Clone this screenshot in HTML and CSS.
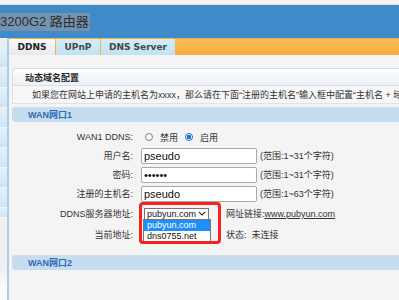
FILE: index.html
```html
<!DOCTYPE html>
<html lang="zh-CN">
<head>
<meta charset="utf-8">
<title>DDNS</title>
<link rel="stylesheet" href="styles.css">
</head>
<body>
<div class="strip"></div>
<header class="banner"><span class="title">3200G2 路由器</span></header>
<div class="main">
  <aside class="side">
    <div class="side-top"></div>
    <div class="side-item"></div><div class="side-item"></div><div class="side-item"></div>
    <div class="side-item"></div><div class="side-item"></div><div class="side-item"></div>
    <div class="side-item"></div><div class="side-item"></div><div class="side-item short"></div>
  </aside>
  <div class="content">
    <nav class="tabs">
      <span class="tab tab-ddns active">DDNS</span>
      <span class="tab tab-upnp">UPnP</span>
      <span class="tab tab-dns">DNS Server</span>
    </nav>
    <div class="page">
      <section class="panel">
        <div class="panel-head">动态域名配置</div>
        <div class="panel-desc">如果您在网站上申请的主机名为xxxx，那么请在下面“注册的主机名”输入框中配置“主机名 + 域名”</div>
      </section>
      <div class="group">WAN网口1</div>
      <form class="form">
        <div class="row row-first">
          <span class="lbl">WAN1 DDNS:</span>
          <div class="val">
            <input class="radio" type="radio" name="ddns"><span class="rtext">禁用</span>
            <input class="radio radio-2" type="radio" name="ddns" checked><span class="rtext">启用</span>
          </div>
        </div>
        <div class="row">
          <span class="lbl">用户名:</span>
          <div class="val"><input class="field" type="text" value="pseudo"><span class="hint">(范围:1~31个字符)</span></div>
        </div>
        <div class="row">
          <span class="lbl">密码:</span>
          <div class="val"><input class="field" type="password" value="pseudo"><span class="hint">(范围:1~31个字符)</span></div>
        </div>
        <div class="row">
          <span class="lbl">注册的主机名:</span>
          <div class="val"><input class="field" type="text" value="pseudo"><span class="hint">(范围:1~63个字符)</span></div>
        </div>
        <div class="row row-sel">
          <span class="lbl">DDNS服务器地址:</span>
          <div class="val">
            <div class="select">
              <span class="sel-text">pubyun.com</span>
              <svg class="chev" width="8" height="5" viewBox="0 0 8 5"><path d="M0.8 0.8 L4 4 L7.2 0.8" fill="none" stroke="#333" stroke-width="1.2"/></svg>
              <ul class="options">
                <li class="opt opt-on">pubyun.com</li>
                <li class="opt">dns0755.net</li>
              </ul>
              <div class="redbox"></div>
            </div>
            <span class="link-line">网址链接:<a class="link" href="#">www.pubyun.com</a></span>
          </div>
        </div>
        <div class="row row-last">
          <span class="lbl">当前地址:</span>
          <div class="val"><span class="status">状态:&nbsp; 未连接</span></div>
        </div>
      </form>
      <div class="group group-2">WAN网口2</div>
    </div>
  </div>
</div>
</body>
</html>
```
FILE: styles.css
```css
* { box-sizing: border-box; margin: 0; padding: 0; }
html, body { width: 399px; height: 300px; overflow: hidden; }
body {
  background: #f4f4f4;
  font-family: "Liberation Sans", "Noto Sans CJK SC", sans-serif;
  font-size: 9px;
  color: #333;
}

.strip { height: 5px; background: #f3f3f3; border-bottom: 1px solid #e0e0e0; }
.banner {
  height: 33px;
  background: #3f8ac8;
  display: flex;
  align-items: center;
}
.title {
  font-size: 13px;
  line-height: 18px;
  color: #2e2e2e;
  background: #7393b0;
  padding-right: 1px;
  white-space: nowrap;
}

.main { display: flex; height: 262px; }
.side {
  width: 9px;
  flex: none;
  border-right: 2px solid #a8cdee;
  background: linear-gradient(#f0f0f0 0, #f0f0f0 230px, #fafafa 250px);
}
.side-top { height: 10px; background: #eceff2; }
.side-item {
  height: 20px;
  background: linear-gradient(#e4f1fa, #cfe5f5);
  border-bottom: 1px solid #eef6fc;
}
.side-item.short { height: 10px; }

.content { flex: 1; min-width: 0; }
.tabs {
  height: 17px;
  display: flex;
  background: linear-gradient(#f9bd55, #f6ad39);
  border-top: 1px solid #f2b04a;
}
.tab {
  height: 16px;
  margin-right: 1px;
  display: flex;
  align-items: center;
  justify-content: center;
  font-family: "DejaVu Sans", sans-serif;
  font-weight: bold;
  font-size: 9px;
  color: #454545;
  background: linear-gradient(#d3edf8, #c0e2f3);
}
.tab.active { background: linear-gradient(#f8f9fa, #e6e9ec); color: #222; }
.tab-ddns { width: 46px; }
.tab-upnp { width: 44px; }
.tab-dns { width: 74px; }

.page { padding: 13px 0 0 3px; }
.panel-head {
  height: 18px;
  display: flex;
  align-items: center;
  padding-left: 12px;
  border: 1px solid #d5e0eb;
  border-right: none;
  border-radius: 3px 0 0 0;
  background: linear-gradient(#fdfeff, #ecf1f6);
  font-weight: bold;
  color: #2a2a2a;
}
.panel-desc {
  height: 18px;
  display: flex;
  align-items: center;
  padding-left: 19px;
  border: 1px solid #e2e2e2;
  border-top: none;
  border-right: none;
  background: #f7f7f7;
  white-space: nowrap;
  overflow: hidden;
}
.group {
  margin-top: 3px;
  height: 15px;
  display: flex;
  align-items: center;
  padding-left: 16px;
  border-radius: 3px 0 0 3px;
  background: #c6dcef;
  color: #2c6cb1;
  font-weight: bold;
}
.group-2 { margin-top: 11px; }

.form { padding-top: 6px; }
.row { height: 19px; display: flex; align-items: center; }
.row-first { height: 18px; }
.row-sel { height: 21px; }
.row-last { height: 20px; }
.lbl { width: 121px; flex: none; text-align: right; white-space: nowrap; }
.val { margin-left: 8px; display: flex; align-items: center; white-space: nowrap; }

.radio {
  appearance: none;
  width: 8px;
  height: 8px;
  margin-left: 4px;
  border: 1px solid #7d7d7d;
  border-radius: 50%;
  background: #fff;
}
.radio:checked {
  border-color: #1d6fd0;
  background: radial-gradient(circle, #1d6fd0 0, #1d6fd0 2px, #fff 2.5px);
}
.radio-2 { margin-left: 7px; }
.rtext { margin-left: 7px; }

.field {
  width: 116px;
  height: 16px;
  padding: 0 2px;
  border: 1px solid #a9a9a9;
  border-radius: 2px;
  background: #fff;
  font-family: "Liberation Sans", sans-serif;
  font-size: 11px;
  color: #111;
  outline: none;
}
.hint { margin-left: 3px; }

.select {
  position: relative;
  margin-left: 3px;
  width: 65px;
  height: 12px;
  display: flex;
  align-items: center;
  justify-content: space-between;
  padding: 0 2px 0 2px;
  border: 1px solid #767676;
  background: #fff;
  color: #111;
  font-size: 9px;
}
.chev { display: block; flex: none; }
.options {
  position: absolute;
  left: -2px;
  top: 10px;
  width: 68px;
  list-style: none;
  border: 1px solid #767676;
  background: #fff;
  z-index: 2;
}
.opt { height: 11px; line-height: 11px; padding-left: 3px; color: #111; font-size: 9px; }
.opt-on { background: #1e8ff5; color: #fff; }
.redbox {
  position: absolute;
  left: -6px;
  top: -7px;
  width: 82px;
  height: 42px;
  border: 3px solid #f42323;
  border-radius: 4px;
  z-index: 3;
}
.link-line { margin-left: 17px; }
.link { color: #333; text-decoration: underline; }
.status { margin-left: 85px; }
```
